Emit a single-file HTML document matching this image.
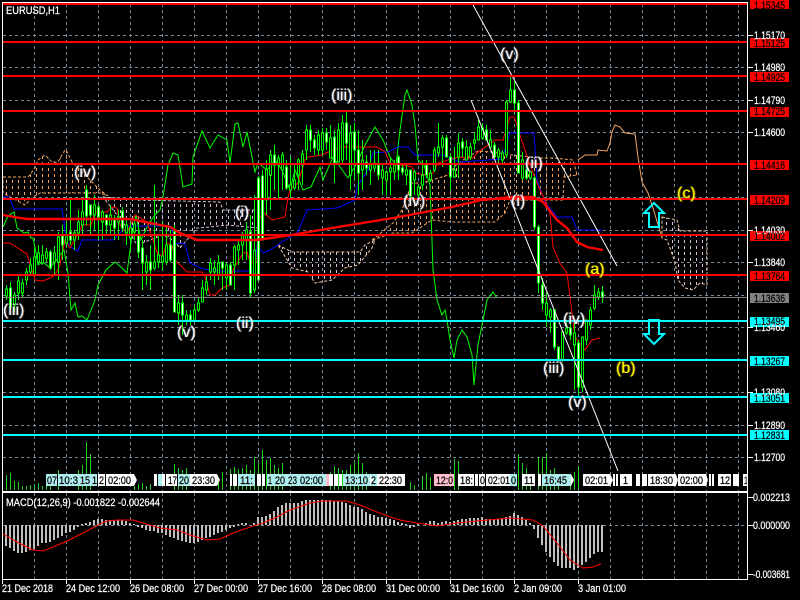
<!DOCTYPE html>
<html><head><meta charset="utf-8"><style>
html,body{margin:0;padding:0;background:#000;overflow:hidden}
#w{position:relative;width:800px;height:600px;background:#000;overflow:hidden;font-family:"Liberation Sans",sans-serif}
svg{position:absolute;left:0;top:0}
text{font-family:"Liberation Sans",sans-serif;font-size:11px;stroke-width:.25px}
.sw text{stroke:#fff}
.sk text{stroke:#000}
.l{position:absolute;font-size:16px;line-height:16px;white-space:nowrap;color:#fff;text-shadow:-1px 0 rgba(90,170,255,.4),1px 0 rgba(255,170,110,.4)}
.y{color:#ff0;text-shadow:-1px 0 rgba(200,200,0,.4),1px 0 rgba(255,150,0,.4)}
</style></head><body><div id="w">
<svg width="800" height="600" viewBox="0 0 800 600">
<defs>
<pattern id="po" width="6" height="6" patternUnits="userSpaceOnUse"><rect x="0" y="0" width="1" height="3" fill="#f4a460"/></pattern>
<pattern id="pt" width="6" height="6" patternUnits="userSpaceOnUse"><rect x="0" y="0" width="1" height="3" fill="#d8bfd8"/></pattern>
</defs>
<!-- grid -->
<g stroke="#778899" stroke-width="1" stroke-dasharray="3 3" fill="none" shape-rendering="crispEdges">
<path d="M34.5 4V491M66.5 4V491M98.5 4V491M130.5 4V491M162.5 4V491M194.5 4V491M226.5 4V491M258.5 4V491M290.5 4V491M322.5 4V491M354.5 4V491M386.5 4V491M418.5 4V491M450.5 4V491M482.5 4V491M514.5 4V491M546.5 4V491M578.5 4V491M610.5 4V491M642.5 4V491M674.5 4V491M706.5 4V491M738.5 4V491"/>
<path d="M34.5 493V579M66.5 493V579M98.5 493V579M130.5 493V579M162.5 493V579M194.5 493V579M226.5 493V579M258.5 493V579M290.5 493V579M322.5 493V579M354.5 493V579M386.5 493V579M418.5 493V579M450.5 493V579M482.5 493V579M514.5 493V579M546.5 493V579M578.5 493V579M610.5 493V579M642.5 493V579M674.5 493V579M706.5 493V579M738.5 493V579"/>
<path d="M3 35.5H748M3 67.5H748M3 100.5H748M3 132.5H748M3 164.5H748M3 197.5H748M3 230.5H748M3 262.5H748M3 295.5H748M3 327.5H748M3 360.5H748M3 392.5H748M3 425.5H748M3 457.5H748M3 525.5H748"/>
</g>
<!-- clouds -->
<g stroke-dasharray="3 2" stroke-width="1">
<path d="M3 177H25L28 177L35 168L38 160L45 155L52 162L58 162L65 150L66 150L72 162L80 170L100 190L108 196L100 193H40L33 197L25 205L3 193Z" fill="url(#po)" stroke="#f4a460"/>
<path d="M103 197L140 200L220 202L223 210H260L258 228L227 225L210 227L197 228L180 248L173 240L163 235L137 245L125 225L103 197Z" fill="url(#pt)" stroke="#d8bfd8"/>
<path d="M278 245L292 252H360L365 245L375 240L372 248L358 265L345 268L332 280L315 283L308 272L292 268Z" fill="url(#pt)" stroke="#f4c8a8"/>
<path d="M372 240L393 223L402 210L412 183H422L432 180L448 175L458 163L478 151L492 152L512 155L540 158H553L573 160L577 175L564 177L563 200H540L510 200L505 213L495 222H452L432 220L412 233L393 233Z" fill="url(#po)" stroke="#f4a460"/>
<path d="M662 217L677 220L680 231H707V285L700 283L693 290L685 288L678 280L675 262L667 240L662 238Z" fill="url(#pt)" stroke="#f4c8a8"/>
</g>
<path d="M578 160L585 155H597L598 150L607 151L610 143L612 132L615 125L620 127L625 133L635 134L638 157L642 182L648 193L653 208L662 238" fill="none" stroke="#f4a460" stroke-width="1"/>
<!-- chikou -->
<path d="M3 227L8 216L14 212L17 228L24 233L28 232L31 238L33 238L36 253L38 265L43 262L50 268L55 262L60 255L64 250L68 273L71 310L75 303L78 317L82 316L87 320L95 300L98 285L106 270L115 262L122 268L127 273L130 250L132 235L136 215L141 240L148 225L155 215L160 210L163 197L168 165L173 153L178 155L183 187L192 184L193 157L202 131L210 148L218 135L227 140L230 163L235 124L238 123L243 147L247 132L252 157L255 172L258 163L267 170L275 160L282 170L290 190L295 170L303 190L311 187L320 167L323 180L333 157L348 178L357 163L365 145L375 127L383 140L390 157L396 165L400 130L405 95L407 90L412 105L415 125L418 160L424 165L430 185L432 240L433 270L437 300L442 315L445 310L447 320L450 340L454 358L457 340L462 330L467 337L472 355L474 385L478 345L482 325L487 300L493 292L497 298" fill="none" stroke="#0f0" stroke-width="1"/>
<!-- kijun -->
<path d="M3 197H9L14 209H62L64 222L66 240L70 247L78 251L82 240H113L123 230L130 226H170L173 232L175 243L185 244L190 263L203 269L220 271H255L257 245L263 253L270 250L285 240L298 232L307 210L337 208L355 200L357 187L368 170L373 153L388 152L398 147H408L415 155H442L455 160L460 162L502 159L507 143L510 133H534L537 180L545 202L557 217H572L577 230H602" fill="none" stroke="#00f" stroke-width="1"/>
<!-- tenkan -->
<path d="M3 243H10L27 254L35 280L43 281L50 278L55 275L60 265L65 240L70 248L80 230L82 225H91L95 212H107L112 207L117 208L120 225L127 233L135 215L147 222L153 240L158 255H163L167 243L172 245L175 260L177 262L187 272H202L205 277L210 295H215L222 288L230 285L233 270L243 253L247 252L250 262H257L258 222L263 212L272 220L285 217L288 197L290 190L298 183L305 160L308 157L322 155L333 150L340 147H377L385 152L390 163L412 167L415 173L425 175L433 173L438 163L458 157L473 158L478 152L495 140H503L507 127L510 117H514L518 128L520 135L525 150L530 165L535 178L540 190L545 200L550 213L553 247L560 263L567 273L570 297L575 337L585 350L592 340L600 338" fill="none" stroke="#f00" stroke-width="1"/>
<!-- volume -->
<path stroke="#22d022" stroke-width="1" fill="none" shape-rendering="crispEdges" d="M6.5 490V475M10.5 490V473M14.5 490V481M18.5 490V482M22.5 490V486M26.5 490V486M30.5 490V485M34.5 490V485M38.5 490V483M42.5 490V486M46.5 490V485M50.5 490V482M58.5 490V470M78.5 490V470M82.5 490V465M86.5 490V442M90.5 490V454M134.5 490V486M138.5 490V484M142.5 490V483M146.5 490V486M150.5 490V484M174.5 490V464M178.5 490V468M182.5 490V470M186.5 490V468M218.5 490V483M222.5 490V472M230.5 490V469M234.5 490V467M238.5 490V469M242.5 490V468M246.5 490V465M250.5 490V470M254.5 490V457M258.5 490V463M262.5 490V450M266.5 490V460M270.5 490V458M274.5 490V465M278.5 490V468M282.5 490V463M330.5 490V472M334.5 490V466M338.5 490V468M342.5 490V470M346.5 490V470M350.5 490V465M354.5 490V462M358.5 490V453M362.5 490V463M366.5 490V472M410.5 490V482M414.5 490V485M422.5 490V476M426.5 490V473M430.5 490V477M454.5 490V459M458.5 490V461M518.5 490V454M522.5 490V463M526.5 490V468M530.5 490V475M538.5 490V457M542.5 490V457M546.5 490V453M550.5 490V470M554.5 490V468M558.5 490V475M570.5 490V482M574.5 490V472M578.5 490V466"/>
<!-- wicks -->
<path stroke="#0f0" stroke-width="1" fill="none" shape-rendering="crispEdges" d="M6.5 285V300M10.5 282V310M14.5 292V312M18.5 275V300M22.5 279V297M26.5 268V285M30.5 258V275M34.5 248V276M38.5 245V265M42.5 245V265M46.5 248V262M50.5 250V270M54.5 246V275M58.5 232V280M62.5 225V260M66.5 222V248M70.5 200V245M74.5 230V250M78.5 210V240M82.5 200V235M86.5 185V225M90.5 205V235M94.5 195V230M98.5 205V240M102.5 210V240M106.5 215V235M110.5 205V235M114.5 215V240M118.5 210V240M122.5 207V232M126.5 220V245M130.5 222V250M134.5 220V240M138.5 225V258M142.5 240V290M146.5 255V285M150.5 245V290M154.5 185V270M158.5 236V268M162.5 222V270M166.5 225V265M170.5 230V262M174.5 225V312M178.5 295V325M182.5 295V335M186.5 310V325M190.5 310V325M194.5 305V322M198.5 298V312M202.5 280V302M206.5 275V295M210.5 258V280M214.5 260V285M218.5 255V280M222.5 262V290M226.5 262V290M230.5 262V285M234.5 245V290M238.5 240V265M242.5 232V260M246.5 222V260M250.5 215V297M254.5 195V293M258.5 176V280M262.5 170V240M266.5 160V215M270.5 150V210M274.5 145V190M278.5 155V200M282.5 152V190M286.5 160V190M290.5 157V197M294.5 165V190M298.5 158V190M302.5 150V185M306.5 125V160M310.5 125V152M314.5 135V155M318.5 130V155M322.5 128V155M326.5 128V150M330.5 125V158M334.5 130V183M338.5 123V162M342.5 115V165M346.5 112V160M350.5 125V190M354.5 123V180M358.5 130V195M362.5 140V190M366.5 155V175M370.5 150V185M374.5 150V172M378.5 150V180M382.5 165V195M386.5 170V195M390.5 158V195M394.5 160V180M398.5 155V180M402.5 165V175M406.5 165V185M410.5 170V198M414.5 170V195M418.5 185V198M422.5 160V190M426.5 160V178M430.5 170V182M434.5 147V172M438.5 123V157M442.5 135V167M446.5 135V157M450.5 153V190M454.5 147V178M458.5 133V178M462.5 138V157M466.5 140V160M470.5 143V160M474.5 132V150M478.5 120V140M482.5 123V140M486.5 125V140M490.5 130V147M494.5 142V158M498.5 148V162M502.5 150V165M506.5 100V158M510.5 77V103M514.5 80V113M518.5 100V173M522.5 152V180M526.5 165V180M530.5 172V180M534.5 176V230M538.5 225V293M542.5 278V310M546.5 293V327M550.5 308V333M554.5 310V350M558.5 347V362M562.5 332V362M566.5 322V335M570.5 322V340M574.5 323V390M578.5 340V395M582.5 337V392M586.5 320V345M590.5 307V330M594.5 285V310M598.5 288V300M602.5 286V303"/>
<!-- black bodies -->
<path fill="#000" stroke="#0f0" stroke-width="1" shape-rendering="crispEdges" d="M5.5 289h2V296h-2zM13.5 295h2V305h-2zM17.5 281h2V293h-2zM21.5 283h2V293h-2zM25.5 272h2V280h-2zM29.5 265h2V272h-2zM33.5 257h2V274h-2zM37.5 253h2V262h-2zM41.5 255h2V263h-2zM45.5 252h2V258h-2zM53.5 253h2V262h-2zM57.5 237h2V262h-2zM65.5 236h2V243h-2zM73.5 233h2V240h-2zM77.5 222h2V233h-2zM81.5 212h2V225h-2zM93.5 205h2V215h-2zM101.5 212h2V222h-2zM109.5 215h2V225h-2zM117.5 217h2V222h-2zM125.5 225h2V233h-2zM129.5 228h2V238h-2zM133.5 224h2V232h-2zM145.5 262h2V272h-2zM153.5 262h2V268h-2zM157.5 255h2V262h-2zM161.5 256h2V262h-2zM165.5 245h2V262h-2zM177.5 303h2V313h-2zM185.5 315h2V320h-2zM193.5 310h2V320h-2zM197.5 303h2V310h-2zM201.5 288h2V302h-2zM205.5 282h2V290h-2zM209.5 263h2V272h-2zM213.5 268h2V272h-2zM217.5 263h2V275h-2zM225.5 265h2V278h-2zM233.5 247h2V265h-2zM237.5 245h2V250h-2zM241.5 235h2V245h-2zM245.5 230h2V240h-2zM253.5 250h2V290h-2zM265.5 170h2V200h-2zM269.5 155h2V175h-2zM277.5 158h2V165h-2zM281.5 155h2V170h-2zM289.5 185h2V190h-2zM293.5 180h2V188h-2zM297.5 160h2V175h-2zM301.5 154h2V165h-2zM305.5 130h2V150h-2zM317.5 135h2V150h-2zM321.5 133h2V150h-2zM329.5 138h2V158h-2zM337.5 130h2V162h-2zM341.5 123h2V160h-2zM349.5 133h2V175h-2zM361.5 160h2V170h-2zM369.5 165h2V170h-2zM373.5 163h2V168h-2zM381.5 170h2V178h-2zM385.5 172h2V180h-2zM389.5 168h2V172h-2zM393.5 165h2V172h-2zM405.5 170h2V175h-2zM413.5 172h2V180h-2zM417.5 187h2V195h-2zM421.5 175h2V185h-2zM429.5 173h2V180h-2zM433.5 150h2V170h-2zM437.5 147h2V153h-2zM441.5 138h2V147h-2zM453.5 170h2V177h-2zM457.5 143h2V157h-2zM465.5 147h2V160h-2zM469.5 147h2V157h-2zM473.5 140h2V143h-2zM477.5 127h2V140h-2zM481.5 128h2V138h-2zM489.5 140h2V147h-2zM497.5 150h2V157h-2zM501.5 153h2V160h-2zM505.5 102h2V155h-2zM509.5 90h2V102h-2zM521.5 160h2V178h-2zM529.5 172h2V178h-2zM545.5 303h2V315h-2zM549.5 310h2V317h-2zM561.5 332h2V360h-2zM565.5 328h2V333h-2zM573.5 333h2V345h-2zM581.5 337h2V387h-2zM585.5 320h2V340h-2zM589.5 310h2V325h-2zM593.5 295h2V308h-2zM597.5 292h2V297h-2z"/>
<!-- white bodies -->
<path fill="#fff" stroke="#0f0" stroke-width="1" shape-rendering="crispEdges" d="M9.5 288h2V307h-2zM49.5 252h2V268h-2zM61.5 235h2V245h-2zM69.5 232h2V240h-2zM85.5 190h2V216h-2zM89.5 205h2V215h-2zM97.5 207h2V217h-2zM105.5 215h2V225h-2zM113.5 218h2V228h-2zM121.5 211h2V228h-2zM137.5 235h2V252h-2zM141.5 248h2V263h-2zM149.5 262h2V270h-2zM169.5 245h2V260h-2zM173.5 232h2V312h-2zM181.5 303h2V315h-2zM189.5 315h2V320h-2zM221.5 262h2V268h-2zM229.5 265h2V285h-2zM249.5 232h2V293h-2zM257.5 178h2V280h-2zM261.5 176h2V240h-2zM273.5 155h2V165h-2zM285.5 167h2V188h-2zM309.5 130h2V140h-2zM313.5 140h2V148h-2zM325.5 133h2V142h-2zM333.5 137h2V163h-2zM345.5 123h2V143h-2zM353.5 132h2V150h-2zM357.5 150h2V173h-2zM365.5 162h2V168h-2zM377.5 165h2V175h-2zM397.5 157h2V170h-2zM401.5 168h2V172h-2zM409.5 170h2V196h-2zM425.5 165h2V175h-2zM445.5 138h2V157h-2zM449.5 157h2V177h-2zM461.5 142h2V148h-2zM485.5 130h2V140h-2zM493.5 145h2V157h-2zM513.5 90h2V103h-2zM517.5 103h2V173h-2zM525.5 170h2V178h-2zM533.5 178h2V227h-2zM537.5 227h2V283h-2zM541.5 285h2V303h-2zM553.5 310h2V347h-2zM557.5 347h2V360h-2zM569.5 328h2V335h-2zM577.5 343h2V387h-2zM601.5 292h2V297h-2z"/>
<!-- thick MA -->
<path d="M3 215L20 218L27 219H130L150 223L170 227L180 233L197 240H227L257 240L285 236L332 228L393 218L420 213L430 211L452 207L482 200L512 197H533L543 202L557 220L567 228L577 242L587 247L603 250" fill="none" stroke="#f00" stroke-width="2.4"/>
<!-- trendlines -->
<path d="M473 5L617 266M471 100L618 471" fill="none" stroke="#fff" stroke-width="1"/>
<!-- levels -->
<g shape-rendering="crispEdges" fill="#f00">
<rect x="3" y="3" width="745" height="2"/><rect x="3" y="41" width="745" height="2"/><rect x="3" y="75" width="745" height="2"/><rect x="3" y="110" width="745" height="2"/><rect x="3" y="163" width="745" height="2"/><rect x="3" y="198" width="745" height="2"/><rect x="3" y="234" width="745" height="2"/><rect x="3" y="274" width="745" height="2"/>
<rect x="3" y="297" width="745" height="1" fill="#808080"/>
<g fill="#0ff"><rect x="3" y="320" width="745" height="2"/><rect x="3" y="359" width="745" height="2"/><rect x="3" y="396" width="745" height="2"/><rect x="3" y="434" width="745" height="2"/></g>
</g>
<!-- arrows -->
<path d="M654 203L664 213H659V227H649V213H644Z" fill="none" stroke="#0ff" stroke-width="2"/>
<path d="M654 344L664 334H659V320H649V334H644Z" fill="none" stroke="#0ff" stroke-width="2"/>
<!-- pills -->
<g shape-rendering="crispEdges">
<g fill="#afeeee">
<rect x="46" y="474" width="11" height="12"/><rect x="58" y="474" width="20" height="12"/><rect x="78" y="474" width="12" height="12"/><rect x="90" y="474" width="7" height="12"/><rect x="158" y="474" width="4" height="12"/><rect x="178" y="474" width="12" height="12"/><rect x="238" y="474" width="17" height="12"/><rect x="267" y="474" width="6" height="12"/><rect x="273" y="474" width="14" height="12"/><rect x="287" y="474" width="11" height="12"/><rect x="298" y="474" width="28" height="12"/><rect x="343" y="474" width="27" height="12"/><rect x="370" y="474" width="7" height="12"/><rect x="510" y="474" width="7" height="12"/><rect x="542" y="474" width="29" height="12"/>
</g>
<g fill="#fff">
<rect x="98" y="474" width="7" height="12"/><rect x="106" y="474" width="28" height="12"/><rect x="154" y="474" width="3" height="12"/><rect x="162" y="474" width="3" height="12"/><rect x="166" y="474" width="11" height="12"/><rect x="190" y="474" width="27" height="12"/><rect x="230" y="474" width="2" height="12"/><rect x="233" y="474" width="4" height="12"/><rect x="257" y="474" width="4" height="12"/><rect x="262" y="474" width="3" height="12"/><rect x="329" y="474" width="4" height="12"/><rect x="334" y="474" width="4" height="12"/><rect x="339" y="474" width="3" height="12"/><rect x="377" y="474" width="28" height="12"/><rect x="400" y="474" width="4" height="12"/><rect x="458" y="474" width="16" height="12"/><rect x="475" y="474" width="3" height="12"/><rect x="479" y="474" width="6" height="12"/><rect x="486" y="474" width="24" height="12"/><rect x="522" y="474" width="13" height="12"/><rect x="538" y="474" width="3" height="12"/><rect x="583" y="474" width="27" height="12"/><rect x="613" y="474" width="2" height="12"/><rect x="616" y="474" width="2" height="12"/><rect x="620" y="474" width="12" height="12"/><rect x="636" y="474" width="4" height="12"/><rect x="642" y="474" width="5" height="12"/><rect x="648" y="474" width="28" height="12"/><rect x="678" y="474" width="28" height="12"/><rect x="709" y="474" width="2" height="12"/><rect x="712" y="474" width="2" height="12"/><rect x="718" y="474" width="13" height="12"/><rect x="733" y="474" width="6" height="12"/><rect x="743" y="474" width="5" height="12"/>
</g>
<rect x="434" y="474" width="20" height="12" fill="#ffc0cb"/><rect x="326" y="474" width="3" height="12" fill="#ffc0cb"/>
<path d="M134 474l3 6-3 6zM217 474l3 6-3 6zM370 474l3 6-3 6zM571 474l3 6-3 6zM610 474l3 6-3 6zM676 474l2 6-2 6zM706 474l2 6-2 6z" fill="#fff"/>
</g>
<g fill="#000" class="sk">
<text x="47" y="484" textLength="10" lengthAdjust="spacingAndGlyphs">07</text><text x="59" y="484" textLength="19" lengthAdjust="spacingAndGlyphs">10:3</text><text x="80" y="484" textLength="10" lengthAdjust="spacingAndGlyphs">15</text><text x="92" y="484" textLength="5" lengthAdjust="spacingAndGlyphs">1</text><text x="99" y="484" textLength="5" lengthAdjust="spacingAndGlyphs">2</text><text x="108" y="484" textLength="23" lengthAdjust="spacingAndGlyphs">02:00</text>
<text x="168" y="484" textLength="9" lengthAdjust="spacingAndGlyphs">17</text><text x="179" y="484" textLength="10" lengthAdjust="spacingAndGlyphs">20</text><text x="192" y="484" textLength="23" lengthAdjust="spacingAndGlyphs">23:30</text>
<text x="240" y="484" textLength="13" lengthAdjust="spacingAndGlyphs">11:</text><text x="268" y="484" textLength="4" lengthAdjust="spacingAndGlyphs">1</text><text x="275" y="484" textLength="10" lengthAdjust="spacingAndGlyphs">20</text><text x="288" y="484" textLength="9" lengthAdjust="spacingAndGlyphs">23</text><text x="300" y="484" textLength="23" lengthAdjust="spacingAndGlyphs">02:00</text>
<text x="345" y="484" textLength="23" lengthAdjust="spacingAndGlyphs">13:10</text><text x="371" y="484" textLength="5" lengthAdjust="spacingAndGlyphs">2</text><text x="379" y="484" textLength="23" lengthAdjust="spacingAndGlyphs">22:30</text>
<text x="436" y="484" textLength="17" lengthAdjust="spacingAndGlyphs">12:0</text><text x="460" y="484" textLength="13" lengthAdjust="spacingAndGlyphs">18:</text><text x="480" y="484" textLength="5" lengthAdjust="spacingAndGlyphs">0</text><text x="488" y="484" textLength="22" lengthAdjust="spacingAndGlyphs">02:01</text><text x="511" y="484" textLength="5" lengthAdjust="spacingAndGlyphs">0</text><text x="524" y="484" textLength="10" lengthAdjust="spacingAndGlyphs">11</text><text x="544" y="484" textLength="23" lengthAdjust="spacingAndGlyphs">16:45</text>
<text x="585" y="484" textLength="23" lengthAdjust="spacingAndGlyphs">02:01</text><text x="623" y="484" textLength="5" lengthAdjust="spacingAndGlyphs">1</text><text x="650" y="484" textLength="23" lengthAdjust="spacingAndGlyphs">18:30</text><text x="680" y="484" textLength="23" lengthAdjust="spacingAndGlyphs">02:00</text><text x="720" y="484" textLength="10" lengthAdjust="spacingAndGlyphs">12</text><text x="744" y="484" textLength="4" lengthAdjust="spacingAndGlyphs">1</text>
</g>
<!-- panel frame -->
<g fill="#fff" shape-rendering="crispEdges">
<rect x="2" y="2" width="746" height="1"/><rect x="2" y="2" width="1" height="578"/><rect x="747" y="2" width="1" height="578"/><rect x="2" y="491" width="746" height="2"/><rect x="2" y="579" width="746" height="1"/>
<path d="M748 35h5v1h-5zM748 67h5v1h-5zM748 100h5v1h-5zM748 132h5v1h-5zM748 230h5v1h-5zM748 262h5v1h-5zM748 327h5v1h-5zM748 392h5v1h-5zM748 425h5v1h-5zM748 457h5v1h-5zM748 497h5v1h-5zM748 525h5v1h-5zM748 574h5v1h-5z"/>
<path d="M2 580h1v4h-1zM66 580h1v4h-1zM130 580h1v4h-1zM194 580h1v4h-1zM258 580h1v4h-1zM322 580h1v4h-1zM386 580h1v4h-1zM450 580h1v4h-1zM514 580h1v4h-1zM578 580h1v4h-1z"/>
</g>
<!-- MACD hist -->
<path stroke="#c0c0c0" stroke-width="2" fill="none" shape-rendering="crispEdges" d="M6 525V546M10 525V548M14 525V551M18 525V553M22 525V553M26 525V552M30 525V550M34 525V549M38 525V546M42 525V543M46 525V543M50 525V542M54 525V540M58 525V538M62 525V536M66 525V533M70 525V532M74 525V530M78 525V527M82 525V524M86 525V523M90 525V522M94 525V520M98 525V519M102 525V519M106 525V520M110 525V520M114 525V520M118 525V520M122 525V520M126 525V521M130 525V523M134 525V524M138 525V527M142 525V528M146 525V530M150 525V531M154 525V531M158 525V533M162 525V533M166 525V535M170 525V537M174 525V538M178 525V540M182 525V541M186 525V542M190 525V543M194 525V543M198 525V542M202 525V540M206 525V538M210 525V537M214 525V535M218 525V533M222 525V532M226 525V530M230 525V528M234 525V527M238 525V524M242 525V523M246 525V523M250 525V525M254 525V523M258 525V517M262 525V517M266 525V516M270 525V514M274 525V511M278 525V507M282 525V505M286 525V503M290 525V503M294 525V503M298 525V503M302 525V501M306 525V500M310 525V500M314 525V500M318 525V500M322 525V500M326 525V500M330 525V500M334 525V501M338 525V501M342 525V502M346 525V503M350 525V505M354 525V507M358 525V507M362 525V509M366 525V512M370 525V514M374 525V515M378 525V517M382 525V517M386 525V518M390 525V519M394 525V520M398 525V522M402 525V523M406 525V524M410 525V528M414 525V527M418 525V524M422 525V525M426 525V523M430 525V521M434 525V521M438 525V523M442 525V522M446 525V521M450 525V522M454 525V521M458 525V520M462 525V519M466 525V519M470 525V518M474 525V518M478 525V518M482 525V517M486 525V519M490 525V519M494 525V519M498 525V519M502 525V518M506 525V517M510 525V516M514 525V513M518 525V515M522 525V517M526 525V520M530 525V523M534 525V529M538 525V538M542 525V545M546 525V552M550 525V557M554 525V562M558 525V566M562 525V568M566 525V568M570 525V568M574 525V570M578 525V568M582 525V565M586 525V562M590 525V558M594 525V554M598 525V552M602 525V552"/>
<path d="M3 534L17 542L33 550L43 551L53 547L67 541L83 533L100 524L107 521L117 520H133L143 523L160 528L177 530L190 535L207 540L220 539L233 533L250 527L263 523L277 517L290 510L310 503L323 501H347L360 505L377 512L390 517L400 520L417 523L437 526L457 523L477 521L510 518L533 520L543 526L557 543L570 560L583 568L593 567L601 564" fill="none" stroke="#f00" stroke-width="1"/>
<!-- level labels -->
<g shape-rendering="crispEdges">
<g fill="#f00"><rect x="750" y="-1" width="39" height="10"/><rect x="750" y="38" width="39" height="10"/><rect x="750" y="72" width="39" height="10"/><rect x="750" y="107" width="39" height="10"/><rect x="750" y="160" width="39" height="10"/><rect x="750" y="195" width="39" height="10"/><rect x="750" y="231" width="39" height="10"/><rect x="750" y="271" width="39" height="10"/></g>
<rect x="750" y="293" width="39" height="10" fill="#808080"/>
<g fill="#0ff"><rect x="750" y="317" width="39" height="10"/><rect x="750" y="356" width="39" height="10"/><rect x="750" y="393" width="39" height="10"/><rect x="750" y="430" width="39" height="10"/></g>
</g>
<g fill="#fff" class="sw">
<text x="754" y="39" textLength="31" lengthAdjust="spacingAndGlyphs">1.15170</text><text x="754" y="71" textLength="31" lengthAdjust="spacingAndGlyphs">1.14980</text><text x="754" y="104" textLength="31" lengthAdjust="spacingAndGlyphs">1.14790</text><text x="754" y="136" textLength="31" lengthAdjust="spacingAndGlyphs">1.14600</text><text x="754" y="234" textLength="31" lengthAdjust="spacingAndGlyphs">1.14030</text><text x="754" y="266" textLength="31" lengthAdjust="spacingAndGlyphs">1.13840</text><text x="754" y="331" textLength="31" lengthAdjust="spacingAndGlyphs">1.13460</text><text x="754" y="396" textLength="31" lengthAdjust="spacingAndGlyphs">1.13080</text><text x="754" y="429" textLength="31" lengthAdjust="spacingAndGlyphs">1.12890</text><text x="754" y="461" textLength="31" lengthAdjust="spacingAndGlyphs">1.12700</text>
<text x="753" y="501" textLength="37" lengthAdjust="spacingAndGlyphs">0.002213</text><text x="753" y="529" textLength="37" lengthAdjust="spacingAndGlyphs">0.000000</text><text x="753" y="578" textLength="37" lengthAdjust="spacingAndGlyphs">-0.003681</text>
</g>
<g fill="#000" class="sk">
<text x="754" y="9" textLength="31" lengthAdjust="spacingAndGlyphs">1.15345</text><text x="754" y="47" textLength="31" lengthAdjust="spacingAndGlyphs">1.15125</text><text x="754" y="81" textLength="31" lengthAdjust="spacingAndGlyphs">1.14925</text><text x="754" y="115" textLength="31" lengthAdjust="spacingAndGlyphs">1.14725</text><text x="754" y="169" textLength="31" lengthAdjust="spacingAndGlyphs">1.14416</text><text x="754" y="204" textLength="31" lengthAdjust="spacingAndGlyphs">1.14209</text><text x="754" y="240" textLength="31" lengthAdjust="spacingAndGlyphs">1.14002</text><text x="754" y="280" textLength="31" lengthAdjust="spacingAndGlyphs">1.13764</text><text x="754" y="302" textLength="31" lengthAdjust="spacingAndGlyphs">1.13636</text><text x="754" y="325" textLength="31" lengthAdjust="spacingAndGlyphs">1.13495</text><text x="754" y="365" textLength="31" lengthAdjust="spacingAndGlyphs">1.13267</text><text x="754" y="402" textLength="31" lengthAdjust="spacingAndGlyphs">1.13051</text><text x="754" y="439" textLength="31" lengthAdjust="spacingAndGlyphs">1.12831</text>
</g>
<g fill="#fff" class="sw">
<text x="6" y="14" textLength="54" lengthAdjust="spacingAndGlyphs">EURUSD,H1</text>
<text x="6" y="506" textLength="154" lengthAdjust="spacingAndGlyphs">MACD(12,26,9) -0.001822 -0.002644</text>
<text x="2" y="592" textLength="51" lengthAdjust="spacingAndGlyphs">21 Dec 2018</text><text x="66" y="592" textLength="54" lengthAdjust="spacingAndGlyphs">24 Dec 12:00</text><text x="130" y="592" textLength="54" lengthAdjust="spacingAndGlyphs">26 Dec 08:00</text><text x="194" y="592" textLength="54" lengthAdjust="spacingAndGlyphs">27 Dec 00:00</text><text x="258" y="592" textLength="54" lengthAdjust="spacingAndGlyphs">27 Dec 16:00</text><text x="322" y="592" textLength="54" lengthAdjust="spacingAndGlyphs">28 Dec 08:00</text><text x="386" y="592" textLength="54" lengthAdjust="spacingAndGlyphs">31 Dec 00:00</text><text x="450" y="592" textLength="54" lengthAdjust="spacingAndGlyphs">31 Dec 16:00</text><text x="514" y="592" textLength="48" lengthAdjust="spacingAndGlyphs">2 Jan 09:00</text><text x="578" y="592" textLength="48" lengthAdjust="spacingAndGlyphs">3 Jan 01:00</text>
</g>
</svg>
<div class="l" style="left:74px;top:165px">(iv)</div>
<div class="l" style="left:3px;top:303px">(iii)</div>
<div class="l" style="left:177px;top:325px">(v)</div>
<div class="l" style="left:236px;top:316px">(ii)</div>
<div class="l" style="left:235px;top:205px">(i)</div>
<div class="l" style="left:331px;top:88px">(iii)</div>
<div class="l" style="left:500px;top:47px">(v)</div>
<div class="l" style="left:403px;top:194px">(iv)</div>
<div class="l" style="left:511px;top:194px">(i)</div>
<div class="l" style="left:525px;top:156px">(ii)</div>
<div class="l" style="left:543px;top:361px">(iii)</div>
<div class="l" style="left:563px;top:312px">(iv)</div>
<div class="l" style="left:568px;top:395px">(v)</div>
<div class="l y" style="left:585px;top:262px">(a)</div>
<div class="l y" style="left:616px;top:361px">(b)</div>
<div class="l y" style="left:677px;top:186px">(c)</div>
</div></body></html>
